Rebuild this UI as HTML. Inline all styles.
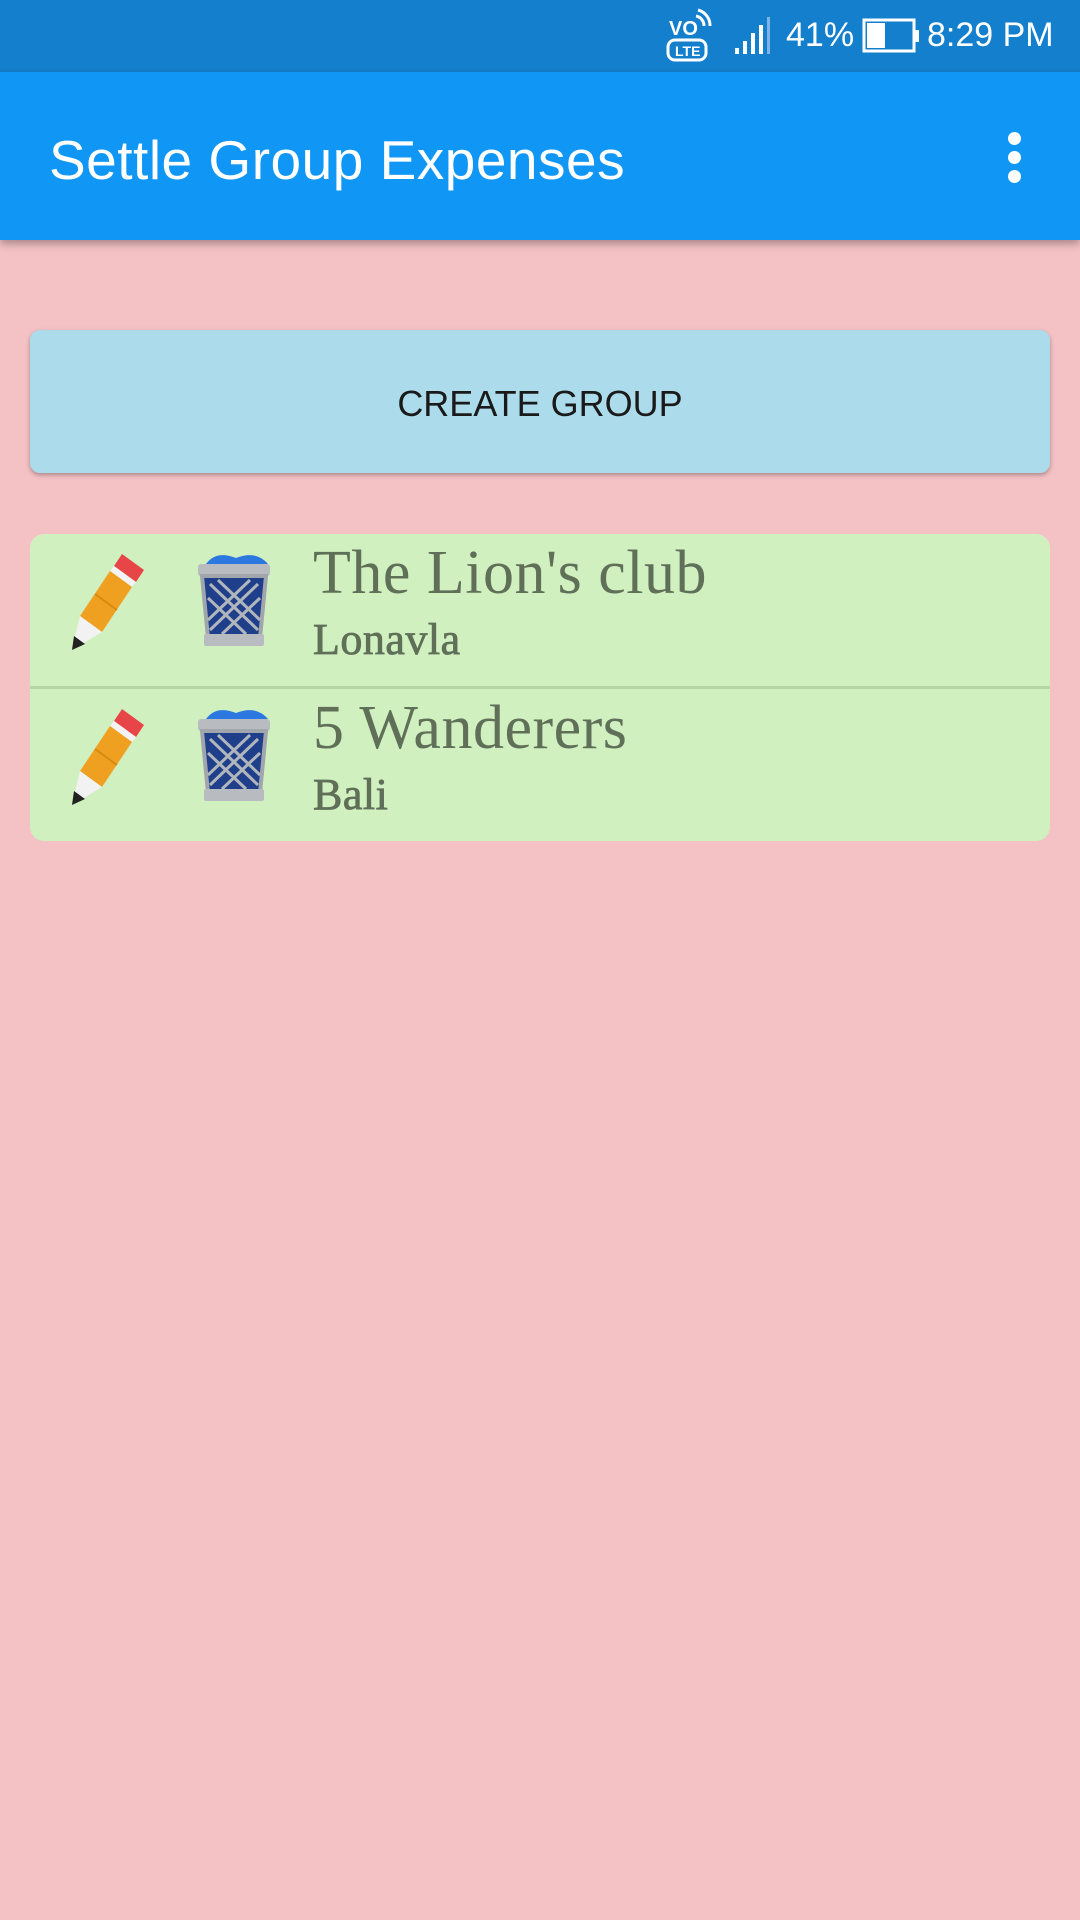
<!DOCTYPE html>
<html><head><meta charset="utf-8"><style>
*{margin:0;padding:0;box-sizing:border-box}
body{width:1080px;height:1920px;background:#f4c2c4;position:relative;overflow:hidden;font-family:"Liberation Sans",sans-serif}
.sb{position:absolute;left:0;top:0;width:1080px;height:72px;background:#147fcc;color:#fff}
.ab{position:absolute;left:0;top:72px;width:1080px;height:168px;background:#1096f5;box-shadow:0 4px 8px rgba(0,0,0,.3)}
.ab h1{position:absolute;left:49px;top:56px;font-weight:normal;font-size:55px;color:#fff;letter-spacing:0.5px}
.dot{position:absolute;left:1008px;width:13px;height:13px;border-radius:50%;background:#fff}
.btn{position:absolute;left:30px;top:330px;width:1020px;height:143px;background:#acdcec;border-radius:10px;box-shadow:0 2px 5px rgba(0,0,0,.3);text-align:center;line-height:147px;font-size:36px;color:#1a1a1a;font-family:"Liberation Sans",sans-serif}
.card{position:absolute;left:30px;top:534px;width:1020px;height:307px;background:#d1f0c0;border-radius:14px}
.div{position:absolute;left:30px;top:686px;width:1020px;height:3px;background:#b5d6a5}
.t{position:absolute;left:313px;font-family:"Liberation Serif",serif;color:#5f6f58;white-space:nowrap}
.t1{font-size:62px;letter-spacing:0.5px}
.t2{font-size:44px;letter-spacing:0.5px;-webkit-text-stroke:0.8px #5f6f58}
</style></head><body>
<div class="sb">
<svg style="position:absolute;left:664px;top:8px" width="50" height="56" viewBox="0 0 50 56">
<text x="5" y="27" font-family="Liberation Sans" font-size="20" font-weight="bold" fill="#fff">VO</text>
<path d="M32 8a10 10 0 0 1 8 10M34 2a16 16 0 0 1 12 16" stroke="#fff" stroke-width="3" fill="none"/>
<rect x="4" y="32" width="38" height="20" rx="7" stroke="#fff" stroke-width="3" fill="none"/>
<text x="11" y="48" font-family="Liberation Sans" font-size="14" font-weight="bold" fill="#fff">LTE</text>
</svg>
<svg style="position:absolute;left:734px;top:16px" width="40" height="40">
<rect x="1" y="32" width="4" height="6" fill="#fff"/><rect x="9" y="25" width="4" height="13" fill="#fff"/><rect x="17" y="17" width="4" height="21" fill="#fff"/><rect x="25" y="9" width="4" height="29" fill="#fff"/><rect x="33" y="1" width="3" height="37" fill="#7fb5e6"/>
</svg>
<div style="position:absolute;left:786px;top:16px;font-size:34px;">41%</div>
<svg style="position:absolute;left:862px;top:18px" width="60" height="36">
<rect x="2" y="2" width="50" height="31" stroke="#fff" stroke-width="3" fill="none"/><rect x="5" y="5" width="18" height="25" fill="#fff"/><rect x="53" y="12" width="4" height="12" fill="#fff"/>
</svg>
<div style="position:absolute;left:927px;top:16px;font-size:34px;">8:29 PM</div>
</div>
<div class="ab"><h1>Settle Group Expenses</h1>
<div class="dot" style="top:60px"></div><div class="dot" style="top:79px"></div><div class="dot" style="top:98px"></div>
</div>
<div class="btn">CREATE GROUP</div>
<div class="card"></div>
<div class="div"></div>

<svg width="0" height="0" style="position:absolute"><defs>
<g id="pen">
<path d="M52 0 L74 16 L66 28 L44 12 Z" fill="#e84548"/>
<path d="M44 12 L66 28 L62 33 L40 17 Z" fill="#f3f3f3"/>
<path d="M40 17 L62 33 L32 78 L10 62 Z" fill="#f0a020"/>
<path d="M25 40 L47 56" stroke="#d58a10" stroke-width="2"/>
<path d="M10 62 L32 78 L2 96 Z" fill="#f2f2f2"/>
<path d="M4 82 L15 90 L2 96 Z" fill="#222"/>
</g>
<g id="can">
<path d="M10 10 Q20 -4 40 4 Q60 -4 72 10 Z" fill="#2a78e0"/>
<rect x="2" y="10" width="72" height="12" rx="3" fill="#b8bcc0"/>
<path d="M6 22 L70 22 L64 84 L12 84 Z" fill="#1f3f8a"/>
<path d="M6 22 L70 22 L64 84 L12 84 Z" fill="none" stroke="#a0a6ac" stroke-width="4"/>
<path d="M14 30 L62 76 M22 26 L64 66 M12 44 L50 80 M62 30 L14 76 M54 26 L12 66 M64 44 L26 80" stroke="#b0b6bc" stroke-width="3"/>
<rect x="8" y="80" width="60" height="12" rx="2" fill="#b8bcc0"/>
</g></defs></svg>

<svg style="position:absolute;left:70px;top:554px" width="76" height="100"><use href="#pen"/></svg>
<svg style="position:absolute;left:196px;top:554px" width="80" height="96"><use href="#can"/></svg>
<div class="t t1" style="top:538px">The Lion's club</div>
<div class="t t2" style="top:614px">Lonavla</div>

<svg style="position:absolute;left:70px;top:709px" width="76" height="100"><use href="#pen"/></svg>
<svg style="position:absolute;left:196px;top:709px" width="80" height="96"><use href="#can"/></svg>
<div class="t t1" style="top:693px">5 Wanderers</div>
<div class="t t2" style="top:769px">Bali</div>
</body></html>
